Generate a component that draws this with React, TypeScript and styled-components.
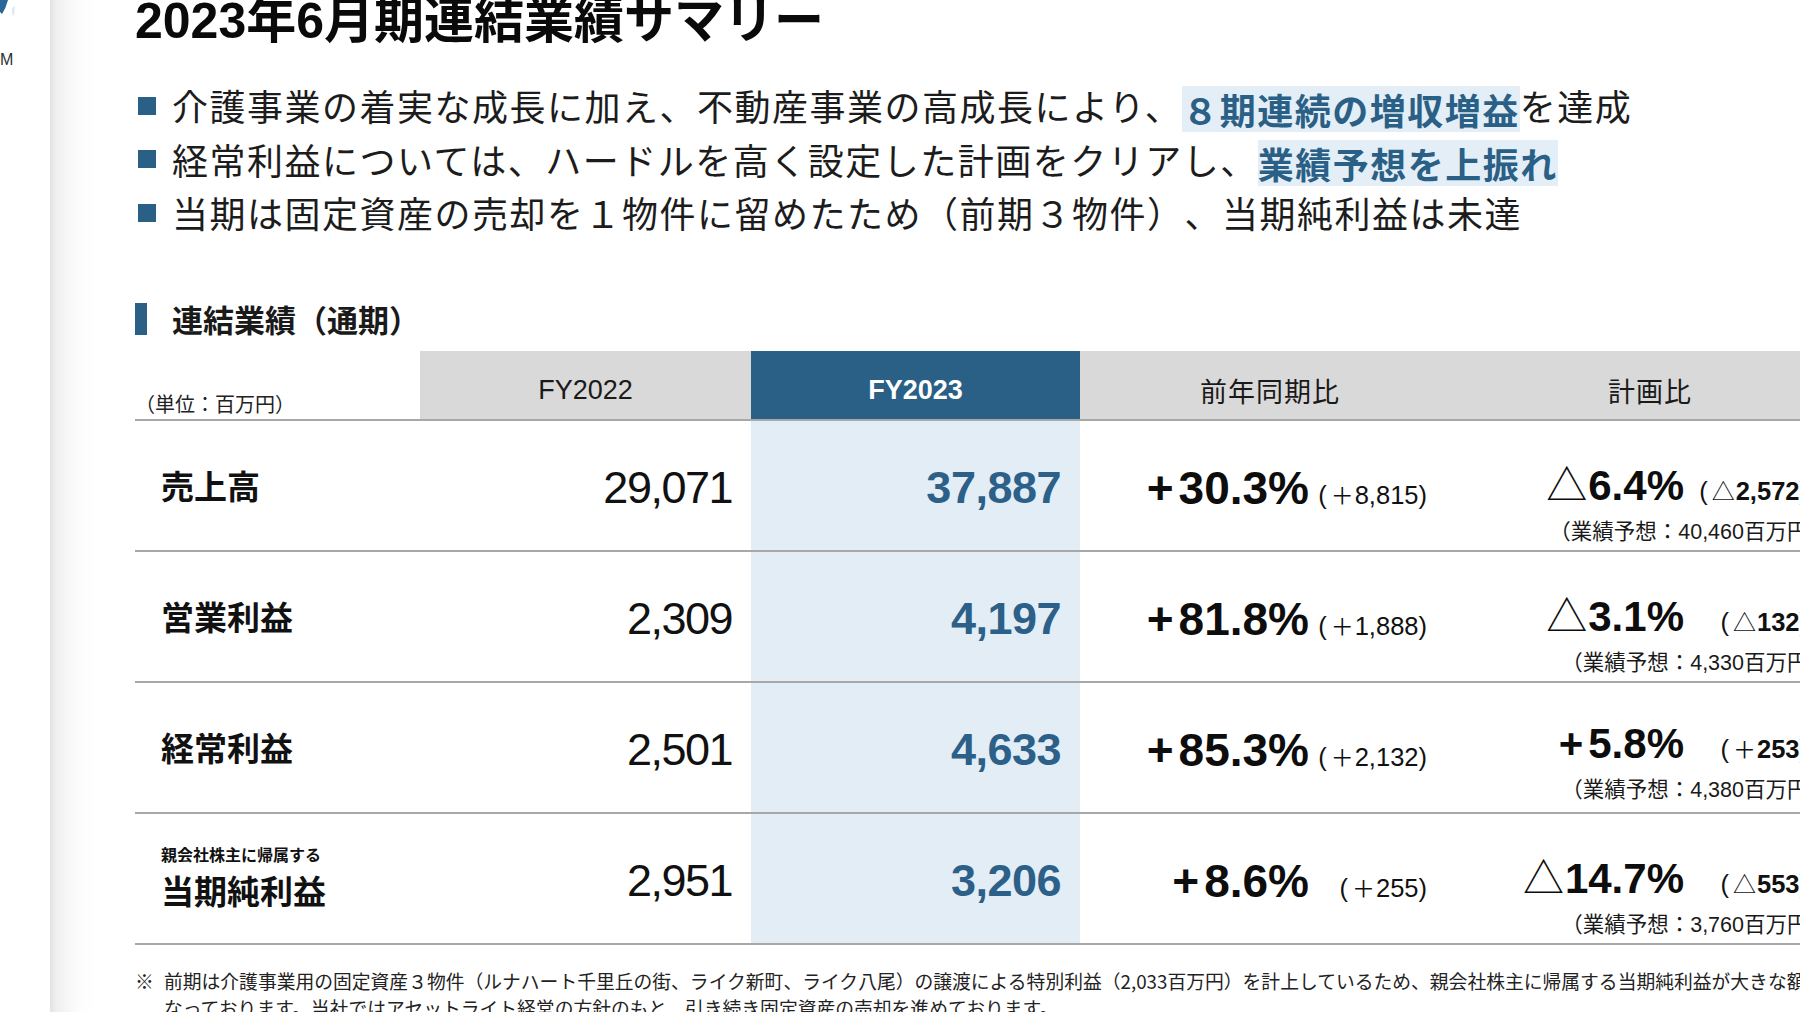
import React from "react";
import styled, { createGlobalStyle } from "styled-components";

const GlobalStyle = createGlobalStyle`
  html, body {
    margin: 0;
    padding: 0;
    width: 1800px;
    height: 1012px;
    overflow: hidden;
    background: #ffffff;
  }
  body {
    font-family: "Noto Sans CJK JP", "Noto Sans", sans-serif;
    color: #1a1a1a;
    text-spacing-trim: space-all;
  }
  * { box-sizing: border-box; }
`;

const JP = `"Noto Sans CJK JP", "Noto Sans", sans-serif`;
const NUM = `"Liberation Sans", "Noto Sans CJK JP", sans-serif`;
const BLUE = "#2a5f86";
const LIGHT_BLUE = "#e3edf5";
const GRID_LINE = "#a8a8a8";

const Page = styled.div`
  display: flex;
  width: 1800px;
  height: 1012px;
  overflow: hidden;
`;

const Sidebar = styled.aside`
  flex: none;
  width: 50px;
  display: flex;
  flex-direction: column;
  align-items: flex-start;
  background: #ffffff;
  overflow: hidden;
`;

const LogoText = styled.span`
  margin-top: 30px;
  font-family: "Liberation Sans", sans-serif;
  font-size: 16px;
  line-height: 20px;
  color: #2f2f2f;
`;

const Slide = styled.main`
  flex: 1;
  min-width: 0;
  padding-left: 85px;
  background: linear-gradient(
    90deg,
    #e2e2e2 0px,
    #efefef 6px,
    #f8f8f8 20px,
    #fdfdfd 32px,
    #ffffff 46px
  );
`;

const Title = styled.h1`
  margin: -7px 0 0 0;
  font-family: ${NUM};
  font-size: 50px;
  line-height: 56px;
  font-weight: 700;
  letter-spacing: 0px;
  color: #0a0a0a;
  white-space: nowrap;
`;

const BulletList = styled.ul`
  list-style: none;
  margin: 30px 0 0 0;
  padding: 0;
`;

const BulletItem = styled.li`
  display: flex;
  align-items: center;
  gap: 16px;
  height: 53.5px;
  margin-left: 3px;
  white-space: nowrap;
`;

const BulletSquare = styled.span`
  flex: none;
  width: 18px;
  height: 18px;
  background: ${BLUE};
`;

const BulletText = styled.span`
  font-family: ${JP};
  font-size: 36px;
  line-height: 53.5px;
  letter-spacing: 1.5px;
  font-weight: 400;
  color: #1c1c1c;
`;

const Highlight = styled.span`
  display: inline-block;
  line-height: 46px;
  background: #e3eef6;
  color: ${BLUE};
  font-weight: 700;
  vertical-align: middle;
  margin-top: -4px;
`;

const SectionHeading = styled.h2`
  display: flex;
  align-items: center;
  gap: 25px;
  margin: 59px 0 0 0;
  height: 40px;
  font-family: ${JP};
  font-size: 31px;
  font-weight: 700;
  color: #1a1a1a;
`;

const SectionBar = styled.span`
  flex: none;
  width: 12px;
  height: 32px;
  background: ${BLUE};
`;

const Table = styled.div`
  display: grid;
  grid-template-columns: 285px 331px 329px 380px 380px;
  margin-top: 12px;
  width: 1705px;
`;

type Tone = "gray" | "blue";

const HeadCell = styled.div<{ $tone: Tone }>`
  height: 70px;
  display: flex;
  align-items: center;
  justify-content: center;
  padding-top: 12px;
  border-bottom: 2px solid ${GRID_LINE};
  background: ${(p) => (p.$tone === "blue" ? BLUE : "#d9d9d9")};
  color: ${(p) => (p.$tone === "blue" ? "#ffffff" : "#1a1a1a")};
  font-family: ${NUM};
  font-size: 27px;
  font-weight: ${(p) => (p.$tone === "blue" ? 700 : 400)};
`;

const HeadJP = styled.span`
  font-family: ${JP};
  font-size: 27px;
  font-weight: 400;
  letter-spacing: 1px;
`;

const UnitCell = styled.div`
  height: 70px;
  display: flex;
  align-items: flex-end;
  padding-bottom: 2px;
  border-bottom: 2px solid ${GRID_LINE};
  font-family: ${JP};
  font-size: 20px;
  line-height: 26px;
  color: #222;
`;

const BodyCell = styled.div<{ $accent?: boolean }>`
  height: 131px;
  border-bottom: 2px solid ${GRID_LINE};
  background: ${(p) => (p.$accent ? LIGHT_BLUE : "transparent")};
`;

const LabelCell = styled(BodyCell)`
  display: flex;
  flex-direction: column;
  justify-content: center;
  padding-left: 26px;
  font-family: ${JP};
  font-weight: 700;
  color: #111;
`;

const LabelSmall = styled.span`
  font-size: 16px;
  line-height: 24px;
`;

const LabelMain = styled.span`
  font-size: 33px;
  line-height: 48px;
`;

const AmountCell = styled(BodyCell)<{ $accent?: boolean }>`
  display: flex;
  align-items: center;
  justify-content: flex-end;
  padding-right: 19px;
  padding-top: 6px;
  font-family: ${NUM};
  font-size: 45px;
  letter-spacing: ${(p) => (p.$accent ? "-0.5px" : "-1.5px")};
  font-weight: ${(p) => (p.$accent ? 700 : 400)};
  color: ${(p) => (p.$accent ? "#2c6088" : "#111")};
`;

const CompareCell = styled(BodyCell)`
  display: grid;
  grid-template-columns: 229px 118px;
  align-content: center;
  align-items: baseline;
  padding-top: 6px;
`;

const PlanCell = styled(BodyCell)`
  display: grid;
  grid-template-columns: 224px 124px;
  align-content: start;
  align-items: baseline;
  padding-top: 36px;
`;

const MainFigure = styled.span<{ $size: number }>`
  justify-self: end;
  font-family: ${NUM};
  font-size: ${(p) => p.$size}px;
  line-height: 50px;
  font-weight: 700;
  color: #0d0d0d;
  white-space: nowrap;
`;

const PlusSign = styled.span`
  margin-right: 5px;
`;

const Triangle = styled.span`
  font-family: ${JP};
  font-weight: 400;
  font-size: 41px;
  margin-right: 1px;
`;

const SubFigure = styled.span`
  justify-self: end;
  font-family: ${NUM};
  font-size: 25.5px;
  line-height: 30px;
  color: #111;
  white-space: nowrap;
`;

const SubParen = styled.span`
  margin-right: 3px;
`;

const SubSign = styled.span`
  font-family: ${JP};
  font-weight: 400;
  font-size: 23px;
  margin: 0 1px;
`;

const SubDigits = styled.span<{ $bold?: boolean }>`
  font-weight: ${(p) => (p.$bold ? 700 : 400)};
`;

const Forecast = styled.span`
  grid-column: 1 / span 2;
  justify-self: end;
  margin-top: 6px;
  margin-right: -22px;
  font-family: ${NUM};
  font-size: 21.5px;
  line-height: 26px;
  color: #1a1a1a;
  white-space: nowrap;
`;

const ForecastJP = styled.span`
  font-family: ${JP};
`;

const Footnote = styled.div`
  display: flex;
  margin-top: 22px;
  font-family: ${JP};
  font-size: 18.8px;
  line-height: 27px;
  color: #222;
  white-space: nowrap;
`;

const FootMark = styled.span`
  flex: none;
  width: 29px;
`;

const FootLines = styled.div`
  display: flex;
  flex-direction: column;
`;

type SignKind = "+" | "△";

type Row = {
  label: string;
  prefix?: string;
  prev: string;
  cur: string;
  yoySign: SignKind;
  yoy: string;
  yoyDiff: string;
  planSign: SignKind;
  plan: string;
  planDiff: string;
  forecast: string;
};

const rows: Row[] = [
  {
    label: "売上高",
    prev: "29,071",
    cur: "37,887",
    yoySign: "+",
    yoy: "30.3%",
    yoyDiff: "8,815",
    planSign: "△",
    plan: "6.4%",
    planDiff: "2,572",
    forecast: "40,460",
  },
  {
    label: "営業利益",
    prev: "2,309",
    cur: "4,197",
    yoySign: "+",
    yoy: "81.8%",
    yoyDiff: "1,888",
    planSign: "△",
    plan: "3.1%",
    planDiff: "132",
    forecast: "4,330",
  },
  {
    label: "経常利益",
    prev: "2,501",
    cur: "4,633",
    yoySign: "+",
    yoy: "85.3%",
    yoyDiff: "2,132",
    planSign: "+",
    plan: "5.8%",
    planDiff: "253",
    forecast: "4,380",
  },
  {
    label: "当期純利益",
    prefix: "親会社株主に帰属する",
    prev: "2,951",
    cur: "3,206",
    yoySign: "+",
    yoy: "8.6%",
    yoyDiff: "255",
    planSign: "△",
    plan: "14.7%",
    planDiff: "553",
    forecast: "3,760",
  },
];

const Sign = ({ s }: { s: SignKind }) =>
  s === "+" ? <PlusSign>+</PlusSign> : <Triangle>△</Triangle>;

const Diff = ({ s, value, bold }: { s: SignKind; value: string; bold?: boolean }) => (
  <SubFigure>
    <SubParen>(</SubParen>
    <SubSign>{s === "+" ? "＋" : "△"}</SubSign>
    <SubDigits $bold={bold}>{value}</SubDigits>)
  </SubFigure>
);

export default function App() {
  return (
    <>
      <GlobalStyle />
      <Page>
        <Sidebar>
          <svg width="16" height="20" viewBox="0 0 16 20" aria-hidden="true">
            <path d="M0 0 L8 0 Q6 8 2 14 L0 12 Z" fill="#2a6796" />
            <path d="M12 8 L15 6 L14 16 L12 14 Z" fill="#dfe9f2" />
          </svg>
          <LogoText>M</LogoText>
        </Sidebar>
        <Slide>
          <Title>2023年6月期連結業績サマリー</Title>
          <BulletList>
            <BulletItem>
              <BulletSquare />
              <BulletText>
                介護事業の着実な成長に加え、不動産事業の高成長により、
                <Highlight>８期連続の増収増益</Highlight>を達成
              </BulletText>
            </BulletItem>
            <BulletItem>
              <BulletSquare />
              <BulletText>
                経常利益については、ハードルを高く設定した計画をクリアし、
                <Highlight>業績予想を上振れ</Highlight>
              </BulletText>
            </BulletItem>
            <BulletItem>
              <BulletSquare />
              <BulletText>
                当期は固定資産の売却を１物件に留めたため（前期３物件）、当期純利益は未達
              </BulletText>
            </BulletItem>
          </BulletList>

          <SectionHeading>
            <SectionBar />
            連結業績（通期）
          </SectionHeading>

          <Table>
            <UnitCell>（単位：百万円）</UnitCell>
            <HeadCell $tone="gray">FY2022</HeadCell>
            <HeadCell $tone="blue">FY2023</HeadCell>
            <HeadCell $tone="gray">
              <HeadJP>前年同期比</HeadJP>
            </HeadCell>
            <HeadCell $tone="gray">
              <HeadJP>計画比</HeadJP>
            </HeadCell>

            {rows.map((r) => (
              <React.Fragment key={r.label}>
                <LabelCell>
                  {r.prefix && <LabelSmall>{r.prefix}</LabelSmall>}
                  <LabelMain>{r.label}</LabelMain>
                </LabelCell>
                <AmountCell>{r.prev}</AmountCell>
                <AmountCell $accent>{r.cur}</AmountCell>
                <CompareCell>
                  <MainFigure $size={46}>
                    <Sign s={r.yoySign} />
                    {r.yoy}
                  </MainFigure>
                  <Diff s={r.yoySign} value={r.yoyDiff} />
                </CompareCell>
                <PlanCell>
                  <MainFigure $size={42}>
                    <Sign s={r.planSign} />
                    {r.plan}
                  </MainFigure>
                  <Diff s={r.planSign} value={r.planDiff} bold />
                  <Forecast>
                    <ForecastJP>（業績予想：</ForecastJP>
                    {r.forecast}
                    <ForecastJP>百万円）</ForecastJP>
                  </Forecast>
                </PlanCell>
              </React.Fragment>
            ))}
          </Table>

          <Footnote>
            <FootMark>※</FootMark>
            <FootLines>
              <span>
                前期は介護事業用の固定資産３物件（ルナハート千里丘の街、ライク新町、ライク八尾）の譲渡による特別利益（2,033百万円）を計上しているため、親会社株主に帰属する当期純利益が大きな額と
              </span>
              <span>
                なっております。当社ではアセットライト経営の方針のもと、引き続き固定資産の売却を進めております。
              </span>
            </FootLines>
          </Footnote>
        </Slide>
      </Page>
    </>
  );
}
